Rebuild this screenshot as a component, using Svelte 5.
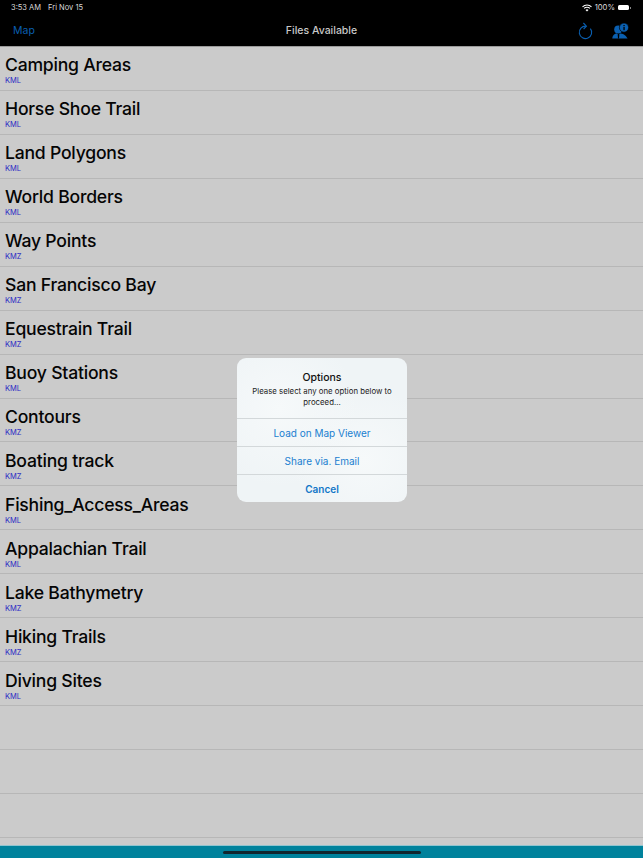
<script>
	const files = [
		['Camping Areas', 'KML'],
		['Horse Shoe Trail', 'KML'],
		['Land Polygons', 'KML'],
		['World Borders', 'KML'],
		['Way Points', 'KMZ'],
		['San Francisco Bay', 'KMZ'],
		['Equestrain Trail', 'KMZ'],
		['Buoy Stations', 'KML'],
		['Contours', 'KMZ'],
		['Boating track', 'KMZ'],
		['Fishing_Access_Areas', 'KML'],
		['Appalachian Trail', 'KML'],
		['Lake Bathymetry', 'KMZ'],
		['Hiking Trails', 'KMZ'],
		['Diving Sites', 'KML'],
		['', ''],
		['', ''],
		['', '']
	];
</script>

<div class="page">
	<header class="top">
		<div class="status">
			<span>3:53 AM</span>
			<span class="date">Fri Nov 15</span>
			<span class="spacer"></span>
			<svg class="wifi" width="10" height="8" viewBox="0 0 10 8">
				<path d="M0.5 2.8 A6.4 6.4 0 0 1 9.5 2.8" fill="none" stroke="#fff" stroke-width="1.1" />
				<path d="M2.1 4.4 A4.1 4.1 0 0 1 7.9 4.4" fill="none" stroke="#fff" stroke-width="1.1" />
				<path d="M3.5 5.9 L5 7.6 L6.5 5.9 A2.1 2.1 0 0 0 3.5 5.9 Z" fill="#fff" />
			</svg>
			<span class="pct">100%</span>
			<span class="battery"></span>
			<span class="nub"></span>
		</div>
		<nav class="bar">
			<span class="map">Map</span>
			<span class="title">Files Available</span>
			<span class="icons">
				<svg width="16" height="18" viewBox="0 0 16 18">
					<path d="M9 4.2 A6.2 6.2 0 1 0 13.4 6.6" fill="none" stroke="#0a5fb0" stroke-width="1.1" />
					<path d="M6.4 1 L9.4 4.2 L6.6 7" fill="none" stroke="#0a5fb0" stroke-width="1.1" />
				</svg>
				<svg width="17" height="16" viewBox="0 0 17 16">
					<circle cx="6.2" cy="6.5" r="4" fill="#0a5fb0" />
					<path d="M0.3 15.6 C0.6 12 2.6 10.8 5 10.6 L6.5 12.6 L8 10.6 C10.5 10.6 13.4 11.6 15.6 15.6 Z" fill="#0a5fb0" />
					<path d="M5.7 12 h1.6 l-0.3 3.6 h-1 Z" fill="#000" />
					<circle cx="12" cy="4.6" r="4.6" fill="#0a5fb0" stroke="#000" stroke-width="0.7" />
					<rect x="11.4" y="4" width="1.3" height="3.2" fill="#000" />
					<rect x="11.4" y="2" width="1.3" height="1.2" fill="#000" />
				</svg>
			</span>
		</nav>
	</header>

	<ul class="list">
		{#each files as [name, kind]}
			<li>
				<div class="name">{name}</div>
				<div class="kind">{kind}</div>
			</li>
		{/each}
	</ul>

	<footer class="foot"><span class="home"></span></footer>

	<div class="dialog">
		<div class="intro">
			<div class="heading">Options</div>
			<p>Please select any one option below to proceed...</p>
		</div>
		<div class="action">Load on Map Viewer</div>
		<div class="action">Share via. Email</div>
		<div class="action cancel">Cancel</div>
	</div>
</div>

<style>
	:global(body) {
		margin: 0;
		background: #cbcbcb;
	}
	.page {
		position: relative;
		width: 643px;
		height: 858px;
		display: flex;
		flex-direction: column;
		overflow: hidden;
		font-family: Inter, "Liberation Sans", sans-serif;
		background: #cbcbcb;
	}
	.top {
		height: 46px;
		background: #000;
		color: #fff;
		flex: none;
		border-bottom: 1px solid #9a9a9a;
	}
	.status {
		height: 15px;
		display: flex;
		align-items: center;
		padding: 0 12px 0 11px;
		font-size: 7.5px;
		color: #d8d8d8;
	}
	.date {
		margin-left: 7px;
	}
	.spacer {
		flex: 1;
	}
	.pct {
		margin-left: 3px;
		font-size: 7.7px;
	}
	.battery {
		width: 11px;
		height: 5px;
		margin-left: 3px;
		border-radius: 1.5px;
		background: #fff;
	}
	.nub {
		width: 1px;
		height: 2px;
		margin-left: 1px;
		background: #888;
	}
	.bar {
		height: 31px;
		display: flex;
		align-items: center;
		justify-content: space-between;
		position: relative;
		padding: 0 14px 0 13px;
		font-size: 10.5px;
	}
	.map {
		color: #0a5fb0;
	}
	.title {
		position: absolute;
		left: 0;
		right: 0;
		text-align: center;
		color: #c9c9c9;
		font-weight: 500;
	}
	.icons {
		display: flex;
		align-items: center;
		gap: 19px;
	}
	.list {
		list-style: none;
		margin: 0;
		padding: 0;
		flex: 1;
		min-height: 0;
	}
	li {
		height: 43.95px;
		box-sizing: border-box;
		border-bottom: 1px solid #b7b7b7;
		padding: 7.4px 0 0 5px;
	}
	.name {
		height: 22px;
		line-height: 22px;
		font-size: 17.6px;
		font-weight: 500;
		letter-spacing: -0.22px;
		color: #050505;
	}
	.kind {
		height: 10px;
		line-height: 10px;
		font-size: 7.5px;
		color: #2a2ac4;
	}
	.foot {
		height: 13px;
		flex: none;
		background: #00829c;
		border-top: 1px solid #8fc4cf;
		box-sizing: border-box;
		display: flex;
		justify-content: center;
		align-items: center;
	}
	.home {
		width: 198px;
		height: 3px;
		border-radius: 2px;
		background: #12262e;
	}
	.dialog {
		position: absolute;
		left: 237px;
		top: 358px;
		width: 170px;
		height: 144px;
		border-radius: 9px;
		background:
			radial-gradient(circle at 25% 35%, #f6f9fa 0, transparent 50%),
			radial-gradient(circle at 75% 70%, #f6f9fa 0, transparent 45%),
			#eff4f6;
		text-align: center;
		display: flex;
		flex-direction: column;
	}
	.intro {
		height: 60px;
		box-sizing: border-box;
		padding-top: 13px;
	}
	.heading {
		font-size: 10.5px;
		font-weight: 500;
		line-height: 14px;
		color: #111;
		margin-bottom: 1px;
	}
	.intro p {
		margin: 0 auto;
		width: 150px;
		font-size: 7.8px;
		line-height: 11px;
		color: #222;
	}
	.action {
		height: 28px;
		line-height: 28px;
		border-top: 1px solid #d3d8da;
		box-sizing: border-box;
		font-size: 10px;
		color: #1a7fd0;
	}
	.cancel {
		font-weight: 600;
		color: #1277c8;
	}
</style>
